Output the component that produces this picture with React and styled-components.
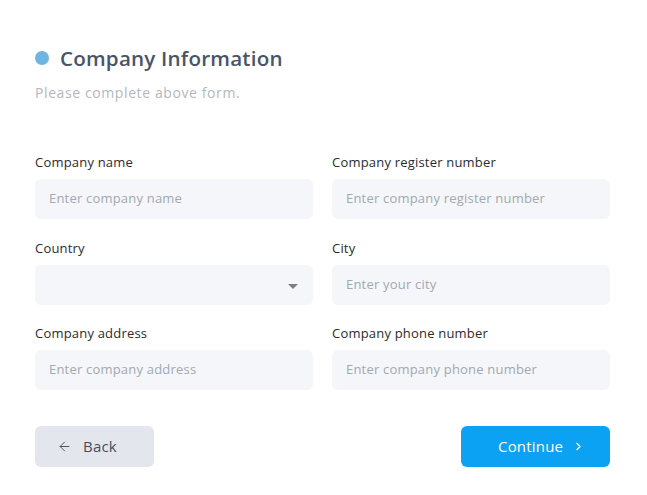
import React from 'react';
import styled, { createGlobalStyle } from 'styled-components';
import { ArrowLeft, ChevronRight } from 'lucide-react';

const GlobalStyle = createGlobalStyle`
  body {
    margin: 0;
    background: #ffffff;
    font-family: 'Open Sans', 'Noto Sans', sans-serif;
  }
  * { box-sizing: border-box; }
`;

const Page = styled.div`
  width: 647px;
  padding: 44px 37px 0 35px;
`;

const TitleRow = styled.div`
  display: flex;
  align-items: center;
  gap: 11px;
  height: 28px;
`;

const Dot = styled.span`
  width: 14px;
  height: 14px;
  border-radius: 50%;
  background: #6db5e3;
  flex-shrink: 0;
`;

const Title = styled.h1`
  margin: 0;
  font-size: 20.6px;
  font-weight: 600;
  color: #4a5468;
  letter-spacing: 0.2px;
`;

const Subtitle = styled.p`
  margin: 11px 0 0;
  font-size: 14px;
  line-height: 20px;
  color: #b3b7c0;
  letter-spacing: 0.6px;
`;

const FormGrid = styled.div`
  display: grid;
  grid-template-columns: 278px 278px;
  column-gap: 19px;
  row-gap: 19.5px;
  margin-top: 50px;
`;

const Field = styled.div`
  display: flex;
  flex-direction: column;
  gap: 8px;
`;

const Label = styled.label`
  font-size: 13px;
  line-height: 18px;
  color: #2b2b2f;
  letter-spacing: 0.2px;
`;

const Input = styled.input`
  height: 40px;
  border: none;
  border-radius: 6px;
  background: #f4f6f9;
  padding: 0 14px 2px;
  font-family: inherit;
  font-size: 13px;
  color: #333;
  outline: none;
  letter-spacing: 0.2px;

  &::placeholder {
    color: #a3a8b2;
  }
`;

const SelectBox = styled.div`
  position: relative;
  height: 40px;
  border-radius: 6px;
  background: #f4f6f9;
`;

const Caret = styled.span`
  position: absolute;
  right: 15px;
  top: 19px;
  width: 0;
  height: 0;
  border-left: 5px solid transparent;
  border-right: 5px solid transparent;
  border-top: 5px solid #7d7f85;
`;

const Actions = styled.div`
  display: flex;
  justify-content: space-between;
  margin-top: 36px;
`;

const Button = styled.button`
  height: 41px;
  border: none;
  border-radius: 6px;
  display: flex;
  align-items: center;
  justify-content: flex-start;
  padding: 0 0 1px ${p => (p.primary ? '37px' : '22px')};
  gap: ${p => (p.primary ? '9px' : '11px')};
  font-family: inherit;
  font-size: 15px;
  letter-spacing: 0.2px;
  cursor: pointer;
  width: ${p => (p.primary ? '149px' : '119px')};
  background: ${p => (p.primary ? '#0ba2f3' : '#e4e6ee')};
  color: ${p => (p.primary ? '#ffffff' : '#4a4c5c')};
`;

const fields = [
  { label: 'Company name', placeholder: 'Enter company name' },
  { label: 'Company register number', placeholder: 'Enter company register number' },
  { label: 'Country', select: true },
  { label: 'City', placeholder: 'Enter your city' },
  { label: 'Company address', placeholder: 'Enter company address' },
  { label: 'Company phone number', placeholder: 'Enter company phone number' },
];

export default function App() {
  return (
    <>
      <GlobalStyle />
      <Page>
        <TitleRow>
          <Dot />
          <Title>Company Information</Title>
        </TitleRow>
        <Subtitle>Please complete above form.</Subtitle>
        <FormGrid>
          {fields.map(f => (
            <Field key={f.label}>
              <Label>{f.label}</Label>
              {f.select ? (
                <SelectBox>
                  <Caret />
                </SelectBox>
              ) : (
                <Input placeholder={f.placeholder} />
              )}
            </Field>
          ))}
        </FormGrid>
        <Actions>
          <Button>
            <ArrowLeft size={15} strokeWidth={1.5} />
            Back
          </Button>
          <Button primary>
            Continue
            <ChevronRight size={13} strokeWidth={2} />
          </Button>
        </Actions>
      </Page>
    </>
  );
}
